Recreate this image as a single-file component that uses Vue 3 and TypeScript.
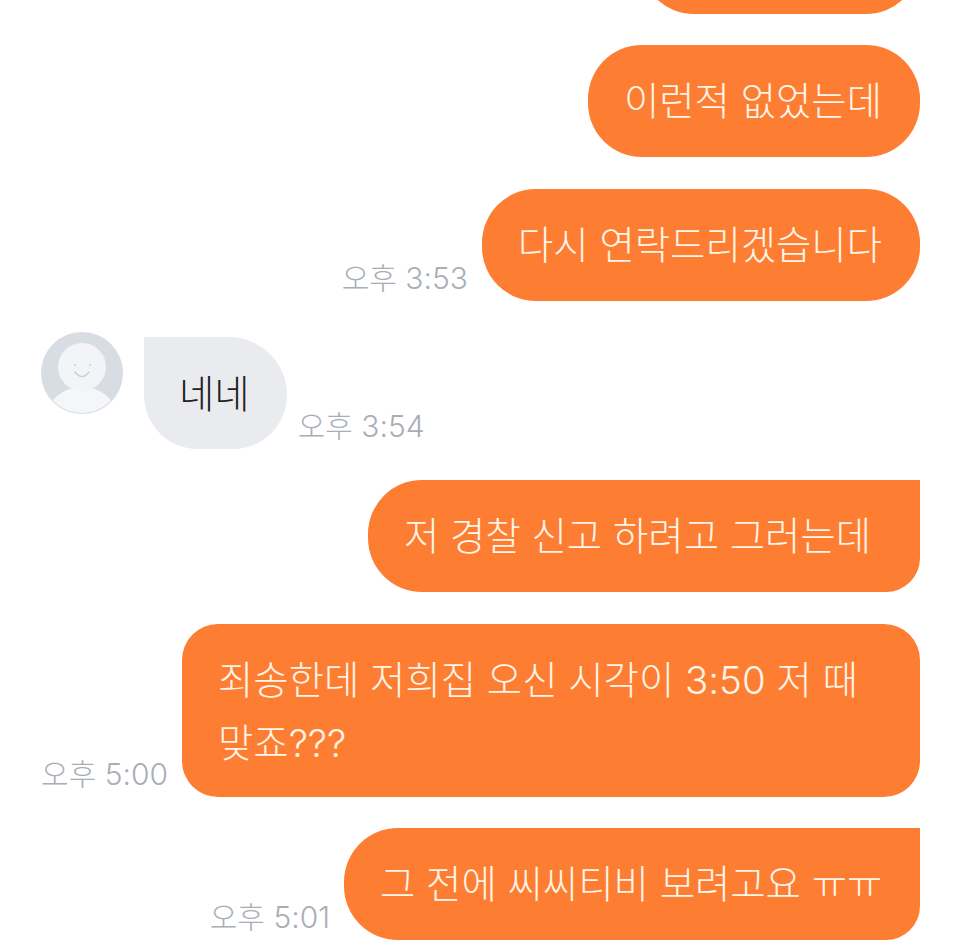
<script setup lang="ts">
interface Msg {
  side: 'me' | 'them'
  text: string
  time?: string
  shape: string
  width?: number
}
const messages: Msg[] = [
  { side: 'me', text: '이런적 없었는데', shape: 'pill' },
  { side: 'me', text: '다시 연락드리겠습니다', time: '오후 3:53', shape: 'pill' },
  { side: 'them', text: '네네', time: '오후 3:54', shape: 'incoming' },
  { side: 'me', text: '저 경찰 신고 하려고 그러는데', shape: 'flat-top', width: 552 },
  { side: 'me', text: '죄송한데 저희집 오신 시각이 3:50 저 때\n맞죠???', time: '오후 5:00', shape: 'block', width: 738 },
  { side: 'me', text: '그 전에 씨씨티비 보려고요 ㅠㅠ', time: '오후 5:01', shape: 'flat-top', width: 576 },
]
</script>

<template>
  <main class="chat">
    <div class="row me cut-off"><div class="bubble pill clipped"></div></div>
    <div v-for="(m, i) in messages" :key="i" class="row" :class="m.side">
      <div v-if="m.side === 'them'" class="avatar">
        <svg viewBox="0 0 82 82" width="82" height="82" aria-hidden="true">
          <circle cx="41" cy="41" r="41" fill="#d8dce3" />
          <clipPath id="av"><circle cx="41" cy="41" r="40" /></clipPath>
          <g clip-path="url(#av)">
            <ellipse cx="41" cy="85" rx="35" ry="30" fill="#f4f6f9" />
            <circle cx="41" cy="35" r="24" fill="#f2f4f8" />
          </g>
          <circle cx="34" cy="33" r="1" fill="#c9cdd4" />
          <circle cx="49" cy="33" r="1" fill="#c9cdd4" />
          <path d="M34 40 Q41 49 48 40" fill="none" stroke="#c9cdd4" stroke-width="1.3" stroke-linecap="round" />
        </svg>
      </div>
      <span v-if="m.side === 'me' && m.time" class="time">{{ m.time }}</span>
      <div class="bubble" :class="m.shape" :style="m.width ? { width: m.width + 'px' } : undefined">{{ m.text }}</div>
      <span v-if="m.side === 'them' && m.time" class="time">{{ m.time }}</span>
    </div>
  </main>
</template>

<style>
html, body { margin: 0; background: #fff; overflow: hidden; }
</style>

<style scoped>
.chat {
  width: 960px;
  height: 946px;
  box-sizing: border-box;
  padding: 0 40px 0 41px;
  display: flex;
  flex-direction: column;
  overflow: hidden;
  font-family: Inter, "Noto Sans CJK KR", sans-serif;
}
.row { display: flex; align-items: flex-end; flex-shrink: 0; margin-bottom: 31px; }
.row:nth-child(3n+2) { margin-bottom: 32px; }
.row.me { justify-content: flex-end; }
.cut-off { margin-top: -98px; }
.avatar { width: 82px; height: 82px; margin-right: 21px; align-self: flex-start; }
.avatar svg { display: block; }
.bubble {
  box-sizing: border-box;
  flex-shrink: 0;
  min-height: 112px;
  padding: 25px 38px 0 36px;
  font-size: 38.4px;
  line-height: 63px;
  font-weight: 300;
  background: #fd7e33;
  color: #fff4e6;
  white-space: pre-line;
  border-radius: 54px;
}
.clipped { width: 280px; }
.flat-top { padding-right: 0; border-radius: 54px 0 34px 54px; }
.incoming { background: #e9ebef; color: #222; margin-top: 5px; border-radius: 0 58px 54px 54px; padding: 26px 37px 0 35px; }
.block { height: 173px; border-radius: 36px; padding-right: 0; }
.time { font-size: 30px; line-height: 36px; color: #a9aeb6; margin: 0 14px 5px 0; font-weight: 300; white-space: nowrap; }
.them .time { margin: 0 0 5px 11px; }
</style>
